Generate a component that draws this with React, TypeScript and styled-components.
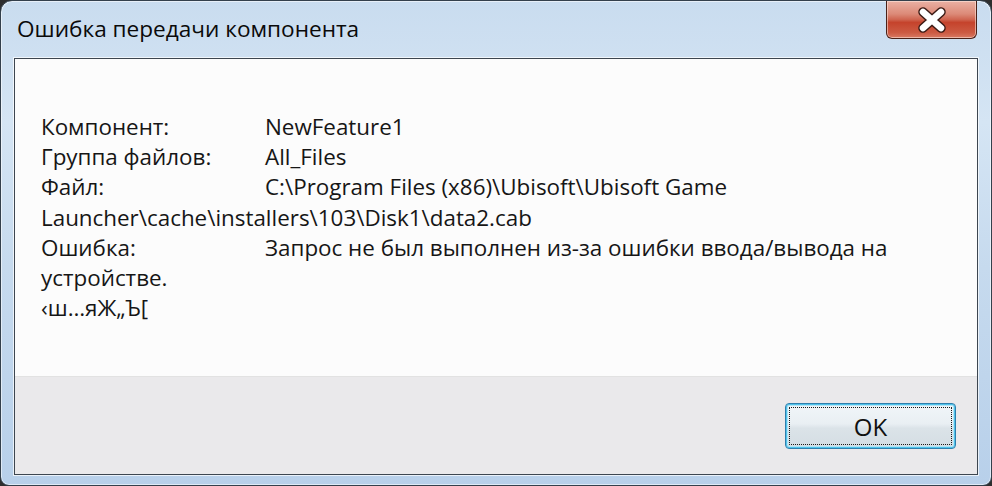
import React from "react";
import styled, { createGlobalStyle } from "styled-components";

const Global = createGlobalStyle`
  html, body { margin: 0; padding: 0; }
  body {
    background: #2e2e2e;
    font-family: "Open Sans", "Noto Sans", sans-serif;
    width: 992px;
    height: 486px;
    overflow: hidden;
  }
`;

const Window = styled.div`
  box-sizing: border-box;
  width: 992px;
  height: 486px;
  border: 1px solid #34404c;
  border-radius: 12px 12px 9px 9px;
  background: linear-gradient(180deg, #c9dcef 0%, #d5e5f4 25%, #c6daee 55%, #b8d0ea 100%);
  display: flex;
  flex-direction: column;
  padding: 0 13px 10px 13px;
  box-shadow: inset 0 0 0 1px rgba(255,255,255,0.55);
`;

const TitleBar = styled.div`
  height: 57px;
  display: flex;
  align-items: flex-start;
  justify-content: space-between;
`;

const Title = styled.div`
  padding: 12px 0 0 3px;
  font-size: 22.6px;
  color: #0a0a0a;
`;

const CloseButton = styled.div`
  box-sizing: border-box;
  width: 91px;
  height: 38px;
  margin-right: 1px;
  border: 1px solid #4a2118;
  border-top: none;
  border-radius: 0 0 6px 6px;
  background: linear-gradient(180deg, #eab1a4 0%, #dc8a78 35%, #cf6550 50%, #c5432c 58%, #cc5a42 85%, #d97a63 100%);
  box-shadow: inset 0 0 0 1px rgba(255,235,225,0.55);
  display: flex;
  align-items: center;
  justify-content: center;
`;

const Client = styled.div`
  flex: 1;
  display: flex;
  flex-direction: column;
  border: 1px solid #3d4650;
  box-shadow: 0 0 0 1px rgba(255,255,255,0.7);
  background: #fcfcfc;
`;

const Body = styled.div`
  flex: 1;
  padding: 53px 20px 0 26px;
  font-size: 22.4px;
  line-height: 30.2px;
  color: #161616;
`;

const Row = styled.div`
  display: grid;
  grid-template-columns: 224px 1fr;
  white-space: nowrap;
`;

const Line = styled.div`
  white-space: nowrap;
`;

const Footer = styled.div`
  height: 98px;
  background: #eae9eb;
  border-top: 1px solid #e2e2e2;
  display: flex;
  justify-content: flex-end;
  align-items: flex-start;
  padding: 26px 21px 0 0;
  box-sizing: border-box;
`;

const OkButton = styled.div`
  box-sizing: border-box;
  width: 171px;
  height: 46px;
  border: 1px solid #2f7fae;
  border-radius: 4px;
  background: linear-gradient(180deg, #f1f6f9 0%, #e9eff3 45%, #dbe3e8 55%, #d4dde3 100%);
  box-shadow: inset 0 0 0 1px #4fc3ea, inset 0 0 0 2px #b2e4f6;
  padding: 3px;
  display: flex;
`;

const FocusRect = styled.div`
  flex: 1;
  border: 1px dotted #1a1a1a;
  border-radius: 1px;
  display: flex;
  align-items: center;
  justify-content: center;
  font-size: 24px;
  color: #111;
`;

const CloseIcon = () => (
  <svg width="34" height="26" viewBox="0 0 34 26">
    <path
      d="M8 5 L26 21 M26 5 L8 21"
      fill="none"
      stroke="#3a1a14"
      strokeWidth="9.5"
      strokeLinecap="round"
    />
    <path
      d="M8 5 L26 21 M26 5 L8 21"
      fill="none"
      stroke="#ffffff"
      strokeWidth="6.5"
      strokeLinecap="round"
    />
  </svg>
);

export default function App() {
  return (
    <>
      <Global />
      <Window>
        <TitleBar>
          <Title>Ошибка передачи компонента</Title>
          <CloseButton>
            <CloseIcon />
          </CloseButton>
        </TitleBar>
        <Client>
          <Body>
            <Row>
              <span>Компонент:</span>
              <span>NewFeature1</span>
            </Row>
            <Row>
              <span>Группа файлов:</span>
              <span>All_Files</span>
            </Row>
            <Row>
              <span>Файл:</span>
              <span>C:\Program Files (x86)\Ubisoft\Ubisoft Game</span>
            </Row>
            <Line>Launcher\cache\installers\103\Disk1\data2.cab</Line>
            <Row>
              <span>Ошибка:</span>
              <span>Запрос не был выполнен из-за ошибки ввода/вывода на</span>
            </Row>
            <Line>устройстве.</Line>
            <Line>‹ш…яЖ„Ъ[</Line>
          </Body>
          <Footer>
            <OkButton>
              <FocusRect>OK</FocusRect>
            </OkButton>
          </Footer>
        </Client>
      </Window>
    </>
  );
}
